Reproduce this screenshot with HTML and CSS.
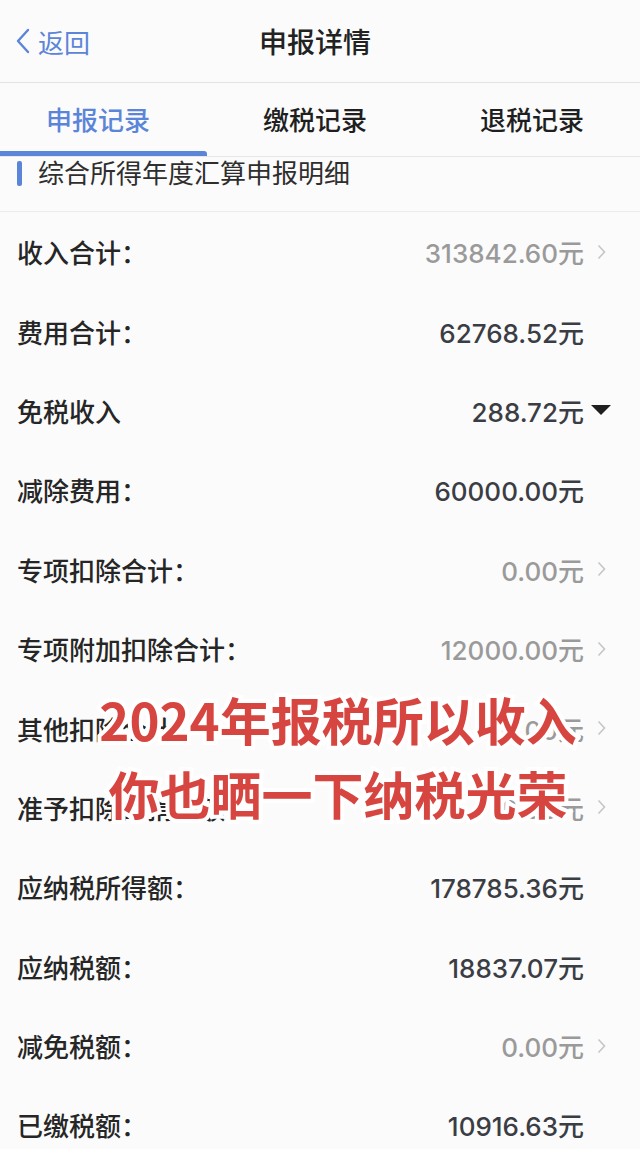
FILE: index.html
```html
<!DOCTYPE html>
<html lang="zh-CN">
<head>
    <meta charset="UTF-8">
    <meta name="viewport" content="width=device-width, initial-scale=1.0">
    <title>申报详情</title>
    <link rel="stylesheet" href="styles.css">
</head>
<body>
    <div class="page">
        <header class="topbar">
            <a class="back" href="#">
                <svg class="back-icon" width="14" height="26" viewBox="0 0 14 26">
                    <path d="M12 2 L2 13 L12 24" fill="none" stroke="currentColor" stroke-width="2.4" stroke-linecap="round" stroke-linejoin="round"/>
                </svg>
                <span>返回</span>
            </a>
            <h1 class="title">申报详情</h1>
            <div></div>
        </header>

        <nav class="tabs">
            <div class="tab-list">
                <a class="tab active" href="#">申报记录</a>
                <a class="tab" href="#">缴税记录</a>
                <a class="tab" href="#">退税记录</a>
            </div>
            <div class="tab-indicator"></div>
        </nav>

        <div class="section-title">
            <span class="section-bar"></span>
            <span>综合所得年度汇算申报明细</span>
        </div>

        <ul class="detail-list">
            <li class="row muted">
                <span class="label">收入合计：</span>
                <span class="value">313842.60元</span>
                <span class="icon"><svg width="9" height="16" viewBox="0 0 9 16"><path d="M1.5 1.5 L7.5 8 L1.5 14.5" fill="none" stroke="#c6c6c6" stroke-width="1.6"/></svg></span>
            </li>
            <li class="row">
                <span class="label">费用合计：</span>
                <span class="value">62768.52元</span>
                <span class="icon"></span>
            </li>
            <li class="row">
                <span class="label">免税收入</span>
                <span class="value">288.72元</span>
                <span class="icon"><svg width="20" height="10" viewBox="0 0 20 10"><path d="M0 0 L20 0 L10 10 Z" fill="#1f1f1f"/></svg></span>
            </li>
            <li class="row">
                <span class="label">减除费用：</span>
                <span class="value">60000.00元</span>
                <span class="icon"></span>
            </li>
            <li class="row muted">
                <span class="label">专项扣除合计：</span>
                <span class="value">0.00元</span>
                <span class="icon"><svg width="9" height="16" viewBox="0 0 9 16"><path d="M1.5 1.5 L7.5 8 L1.5 14.5" fill="none" stroke="#c6c6c6" stroke-width="1.6"/></svg></span>
            </li>
            <li class="row muted">
                <span class="label">专项附加扣除合计：</span>
                <span class="value">12000.00元</span>
                <span class="icon"><svg width="9" height="16" viewBox="0 0 9 16"><path d="M1.5 1.5 L7.5 8 L1.5 14.5" fill="none" stroke="#c6c6c6" stroke-width="1.6"/></svg></span>
            </li>
            <li class="row muted">
                <span class="label">其他扣除合计：</span>
                <span class="value">0.00元</span>
                <span class="icon"><svg width="9" height="16" viewBox="0 0 9 16"><path d="M1.5 1.5 L7.5 8 L1.5 14.5" fill="none" stroke="#c6c6c6" stroke-width="1.6"/></svg></span>
            </li>
            <li class="row muted">
                <span class="label">准予扣除的捐赠额：</span>
                <span class="value">0.00元</span>
                <span class="icon"><svg width="9" height="16" viewBox="0 0 9 16"><path d="M1.5 1.5 L7.5 8 L1.5 14.5" fill="none" stroke="#c6c6c6" stroke-width="1.6"/></svg></span>
            </li>
            <li class="row">
                <span class="label">应纳税所得额：</span>
                <span class="value">178785.36元</span>
                <span class="icon"></span>
            </li>
            <li class="row">
                <span class="label">应纳税额：</span>
                <span class="value">18837.07元</span>
                <span class="icon"></span>
            </li>
            <li class="row muted">
                <span class="label">减免税额：</span>
                <span class="value">0.00元</span>
                <span class="icon"><svg width="9" height="16" viewBox="0 0 9 16"><path d="M1.5 1.5 L7.5 8 L1.5 14.5" fill="none" stroke="#c6c6c6" stroke-width="1.6"/></svg></span>
            </li>
            <li class="row">
                <span class="label">已缴税额：</span>
                <span class="value">10916.63元</span>
                <span class="icon"></span>
            </li>
        </ul>

        <!-- caption pasted over the screenshot -->
        <div class="overlay">
            <p>2024年报税所以收入</p>
            <p>你也晒一下纳税光荣</p>
        </div>
    </div>
</body>
</html>
```

FILE: styles.css
```css
html, body {
    margin: 0;
    padding: 0;
    overflow: hidden;
}

body {
    font-family: "Noto Sans CJK SC", sans-serif;
    background: #fbfbfb;
    color: #2a2a2a;
}

.page {
    position: relative;
    width: 640px;
    height: 1149px;
}

a {
    text-decoration: none;
    color: inherit;
}

/* top bar */
.topbar {
    display: grid;
    grid-template-columns: 1fr auto 1fr;
    align-items: center;
    height: 82px;
    border-bottom: 1px solid #e3e3e3;
}

.back {
    display: flex;
    align-items: center;
    padding-left: 16px;
    color: #5b85d8;
    font-size: 26px;
}

.back-icon {
    margin-right: 8px;
}

.title {
    margin: 0;
    padding-right: 10px;
    font-size: 28px;
    font-weight: 500;
    color: #222;
}

/* tabs */
.tabs {
    border-bottom: 1px solid #e6e6e6;
}

.tab-list {
    display: flex;
    justify-content: space-between;
    align-items: center;
    height: 66px;
    padding: 2px 56px 0 46px;
}

.tab {
    font-size: 26px;
    font-weight: 500;
    color: #1f1f1f;
}

.tab.active {
    color: #5b85d8;
}

.tab-indicator {
    width: 207px;
    height: 5px;
    background: #5b85d8;
    border-radius: 0 3px 0 0;
}

/* section heading */
.section-title {
    display: flex;
    align-items: center;
    height: 29px;
    padding-bottom: 25px;
    font-size: 26px;
    color: #2e2e2e;
    border-bottom: 1px solid #ececec;
}

.section-bar {
    width: 5px;
    height: 25px;
    margin: 3px 16px 0 17px;
    background: #5b85d8;
    border-radius: 2px;
}

/* detail rows */
.detail-list {
    list-style: none;
    margin: 0;
    padding: 0;
}

.row {
    display: flex;
    align-items: center;
    height: 79.4px;
    padding: 0 22px 0 17px;
}

.label {
    flex: 1;
    font-size: 26px;
    font-weight: 500;
    color: #262626;
}

.value {
    font-family: Inter, "Noto Sans CJK SC", sans-serif;
    font-size: 26px;
    font-weight: 500;
    color: #3b3d44;
}

.row.muted .value {
    color: #9a9a9a;
}

.icon {
    display: flex;
    justify-content: center;
    align-items: center;
    width: 34px;
}

/* red caption */
.overlay {
    position: absolute;
    top: 682px;
    left: 36px;
    width: 604px;
    text-align: center;
}

.overlay p {
    margin: 0;
    line-height: 74px;
    font-size: 51px;
    font-weight: 700;
    color: #d6453f;
    -webkit-text-stroke: 8px #fff;
    paint-order: stroke fill;
}
```
